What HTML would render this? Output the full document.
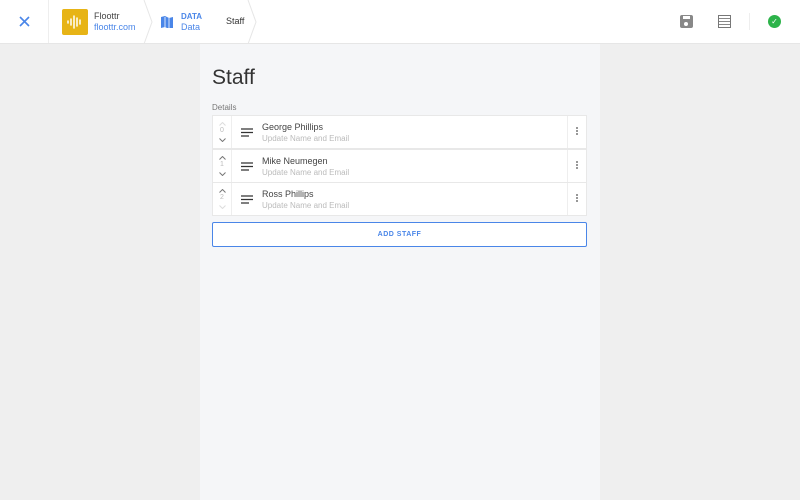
<!DOCTYPE html><html><head><style>
*{box-sizing:border-box;margin:0;padding:0}
body{width:800px;height:500px;background:#efefef;font-family:"Liberation Sans",sans-serif;position:relative;overflow:hidden}
.hd{position:absolute;top:0;left:0;width:800px;height:44px;background:#fff;border-bottom:1px solid #e6e6e6}
.panel{position:absolute;left:200px;top:44px;width:400px;height:456px;background:#f5f6f8}
.a{position:absolute}
.row{position:absolute;left:212px;width:375px;height:34px;background:#fff;border:1px solid #e8e8e8}
.row .ord{position:absolute;left:0;top:0;width:19px;height:100%;border-right:1px solid #eee}
.row .ord span{position:absolute;left:0;width:18px;top:11px;text-align:center;font-size:7px;color:#bbb}
.row .n{position:absolute;left:49px;top:6px;font-size:9px;color:#444}
.row .s{position:absolute;left:49px;top:18px;font-size:8px;color:#bbb}
.row .m{position:absolute;right:0;top:0;width:19px;height:100%;border-left:1px solid #eee}
.dots{position:absolute;left:8px;top:11px;width:2px;height:2px;background:#777;box-shadow:0 3px #777,0 6px #777;border-radius:1px}
</style></head><body>
<div class="hd">
<svg class="a" style="left:19px;top:16px" width="11" height="11"><path d="M1 1l9 9M10 1l-9 9" stroke="#4a86e8" stroke-width="1.6"/></svg>
<div class="a" style="left:48px;top:0;width:1px;height:43px;background:#eee"></div>
<div class="a" style="left:62px;top:9px;width:26px;height:26px;background:#e7b416;border-radius:2px">
<svg width="26" height="26"><g stroke="#fff" stroke-width="1.5" stroke-linecap="round"><path d="M6 12v2M9 10v6M12 7v12M15 9v8M18 11v4"/></g></svg></div>
<div class="a" style="left:94px;top:11px;font-size:9px;color:#444">Floottr</div>
<div class="a" style="left:94px;top:22px;font-size:9px;color:#4a86e8">floottr.com</div>
<svg class="a" style="left:140px;top:0" width="130" height="44"><path d="M4 0l8 22-8 22M108 0l8 22-8 22" stroke="#e6e6e6" fill="none"/></svg>
<svg class="a" style="left:161px;top:16px" width="12" height="12"><path d="M0 1l4-1 4 2 4-1v11l-4 1-4-2-4 1z" fill="#4a86e8"/><path d="M4 1v10M8 2v10" stroke="#fff" stroke-width=".8"/></svg>
<div class="a" style="left:181px;top:12px;font-size:8px;font-weight:bold;color:#4a86e8">DATA</div>
<div class="a" style="left:181px;top:22px;font-size:9px;color:#4a86e8">Data</div>
<div class="a" style="left:226px;top:16px;font-size:9px;color:#333">Staff</div>
<div class="a" style="left:680px;top:15px;width:13px;height:13px;background:#888;border-radius:2px"><div style="position:absolute;left:3px;top:1px;width:7px;height:3px;background:#fff"></div><div style="position:absolute;left:4px;top:7px;width:4px;height:4px;background:#fff;border-radius:50%"></div></div>
<div class="a" style="left:718px;top:15px;width:13px;height:13px;border:1.5px solid #777;background:repeating-linear-gradient(#fff 0 2px,#888 2px 3px)"></div>
<div class="a" style="left:749px;top:13px;width:1px;height:17px;background:#eee"></div>
<div class="a" style="left:768px;top:15px;width:13px;height:13px;border-radius:50%;background:#2db34a;color:#fff;font-size:8px;text-align:center;line-height:13px">✓</div>
</div>
<div class="panel"></div>
<div class="a" style="left:212px;top:66px;font-size:21px;color:#333">Staff</div>
<div class="a" style="left:212px;top:103px;font-size:8px;color:#777">Details</div>
<div class="row" style="top:115px"><div class="ord"><svg class="a" style="left:6px;top:6px" width="7" height="4"><path d="M.5 3.5l3-3 3 3" stroke="#ddd" fill="none"/></svg><span>0</span><svg class="a" style="left:6px;top:22px" width="7" height="4"><path d="M.5 .5l3 3 3-3" stroke="#777" fill="none"/></svg></div><svg class="a" style="left:28px;top:12px" width="12" height="9"><path d="M0 1h12M0 4.5h12M0 8h8" stroke="#333" stroke-width="1.3"/></svg><div class="n">George Phillips</div><div class="s">Update Name and Email</div><div class="m"><div class="dots"></div></div></div>
<div class="row" style="top:149px"><div class="ord"><svg class="a" style="left:6px;top:6px" width="7" height="4"><path d="M.5 3.5l3-3 3 3" stroke="#777" fill="none"/></svg><span>1</span><svg class="a" style="left:6px;top:22px" width="7" height="4"><path d="M.5 .5l3 3 3-3" stroke="#777" fill="none"/></svg></div><svg class="a" style="left:28px;top:12px" width="12" height="9"><path d="M0 1h12M0 4.5h12M0 8h8" stroke="#333" stroke-width="1.3"/></svg><div class="n">Mike Neumegen</div><div class="s">Update Name and Email</div><div class="m"><div class="dots"></div></div></div>
<div class="row" style="top:182px"><div class="ord"><svg class="a" style="left:6px;top:6px" width="7" height="4"><path d="M.5 3.5l3-3 3 3" stroke="#777" fill="none"/></svg><span>2</span><svg class="a" style="left:6px;top:22px" width="7" height="4"><path d="M.5 .5l3 3 3-3" stroke="#ddd" fill="none"/></svg></div><svg class="a" style="left:28px;top:12px" width="12" height="9"><path d="M0 1h12M0 4.5h12M0 8h8" stroke="#333" stroke-width="1.3"/></svg><div class="n">Ross Phillips</div><div class="s">Update Name and Email</div><div class="m"><div class="dots"></div></div></div>
<div class="a" style="left:212px;top:222px;width:375px;height:25px;border:1px solid #4a86e8;border-radius:2px;background:#fff;color:#4a86e8;font-size:7px;font-weight:bold;text-align:center;line-height:23px;letter-spacing:.5px">ADD STAFF</div>
</body></html>
